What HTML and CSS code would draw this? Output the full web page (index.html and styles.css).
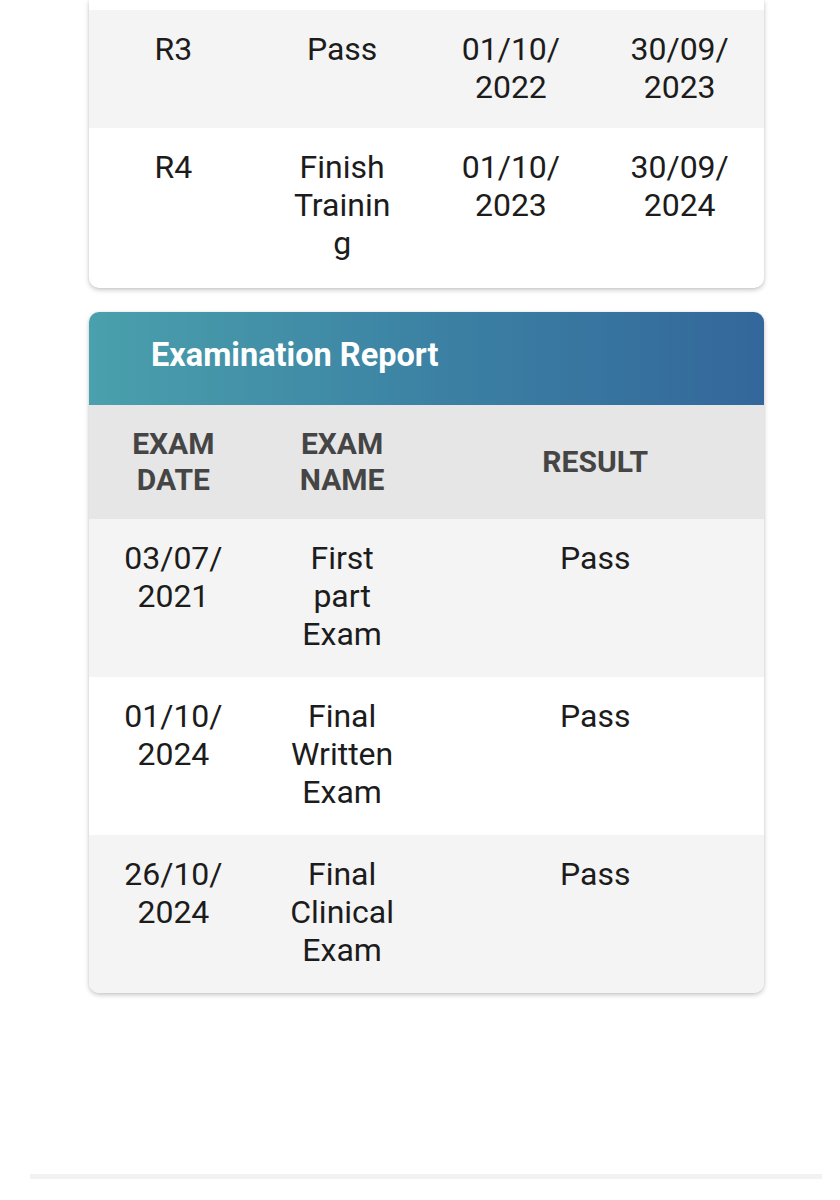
FILE: index.html
```html
<!DOCTYPE html>
<html lang="en">
<head>
<meta charset="utf-8">
<title>Training &amp; Examination</title>
<link rel="stylesheet" href="styles.css">
</head>
<body>
<main class="page">
  <section class="card card-cut">
    <table class="grid grid-4">
      <tbody>
        <tr class="row-tail"><td></td><td></td><td></td><td></td></tr>
        <tr class="row-alt"><td>R3</td><td>Pass</td><td>01/10/2022</td><td>30/09/2023</td></tr>
        <tr class="row-end"><td>R4</td><td>Finish Training</td><td>01/10/2023</td><td>30/09/2024</td></tr>
      </tbody>
    </table>
  </section>

  <section class="card">
    <h2 class="card-title">Examination Report</h2>
    <table class="grid grid-exam">
      <colgroup><col class="c-quarter"><col class="c-quarter"><col class="c-half"></colgroup>
      <thead>
        <tr><th>EXAM DATE</th><th>EXAM NAME</th><th>RESULT</th></tr>
      </thead>
      <tbody>
        <tr class="row-alt"><td>03/07/2021</td><td>First part Exam</td><td>Pass</td></tr>
        <tr><td>01/10/2024</td><td>Final Written Exam</td><td>Pass</td></tr>
        <tr class="row-alt"><td>26/10/2024</td><td>Final Clinical Exam</td><td>Pass</td></tr>
      </tbody>
    </table>
  </section>
</main>
<div class="bottom-bar"></div>
</body>
</html>
```

FILE: styles.css
```css
html, body {
  margin: 0;
  padding: 0;
  background: #ffffff;
}

body {
  font-family: Roboto, "Liberation Sans", sans-serif;
  color: #1c1c1c;
  width: 840px;
  height: 1200px;
  overflow: hidden;
}

.page {
  width: 675px;
  margin-left: 89px;
  display: flex;
  flex-direction: column;
  gap: 24px;
}

.card {
  background: #ffffff;
  border-radius: 10px;
  box-shadow: 0 2px 5px rgba(0, 0, 0, 0.22), 0 0 2px rgba(0, 0, 0, 0.08);
  overflow: hidden;
}

.card-cut {
  border-top-left-radius: 0;
  border-top-right-radius: 0;
}

.card-title {
  margin: 0;
  box-sizing: border-box;
  height: 93px;
  display: flex;
  align-items: center;
  padding: 0 0 8px 62px;
  font-size: 32.5px;
  font-weight: 700;
  color: #ffffff;
  background: linear-gradient(90deg, #4aa0ac 0%, #3c82a4 50%, #33679b 100%);
}

.grid {
  width: 100%;
  border-collapse: collapse;
  table-layout: fixed;
}

.c-quarter { width: 25%; }
.c-half { width: 50%; }

.grid td,
.grid th {
  text-align: center;
  vertical-align: top;
  padding: 20px 30px 24px;
  font-size: 32px;
  line-height: 38px;
  font-weight: 400;
  overflow-wrap: anywhere;
}

.grid-4 .row-alt td {
  padding-bottom: 22px;
}

.grid-4 .row-end td {
  padding-bottom: 26px;
}

.grid th {
  vertical-align: middle;
  padding: 21px 30px;
  font-size: 30px;
  line-height: 36px;
  font-weight: 700;
  color: #454545;
  background: #e6e6e6;
}

.grid-4 .row-tail td {
  padding: 0;
  height: 10px;
}

.row-alt {
  background: #f4f4f4;
}

.bottom-bar {
  margin: 181px 18px 0 30px;
  height: 5px;
  background: #f2f2f2;
}
```
